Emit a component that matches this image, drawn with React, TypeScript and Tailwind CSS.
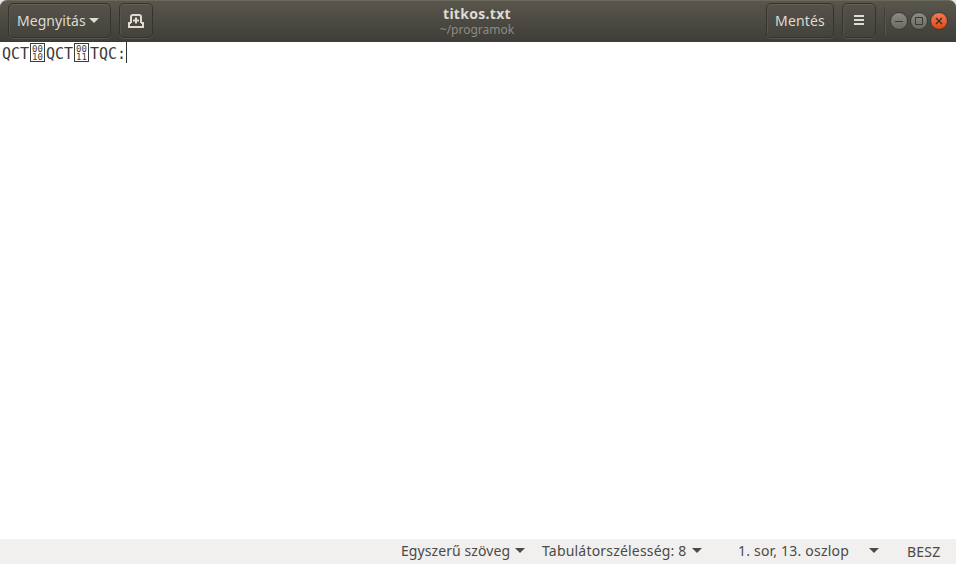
import type { ReactNode } from "react";

function HeaderButton({ className, children }: { className: string; children: ReactNode }) {
  return (
    <button
      className={`flex h-[35px] items-center rounded-[5px] border border-[#34332e] bg-linear-to-b from-[#55534a] to-[#43423c] text-[#dfdbd2] shadow-[inset_0_1px_0_#625f55,inset_1px_0_0_#57554d,0_1px_0_#56544c] ${className}`}
    >
      {children}
    </button>
  );
}

function Arrow({ className }: { className: string }) {
  return (
    <svg className={`h-[5px] w-[10px] shrink-0 ${className}`} viewBox="0 0 10 5" fill="currentColor">
      <path d="M0 0h10L5 5z" />
    </svg>
  );
}

function WindowButton({ className, children }: { className: string; children: ReactNode }) {
  return (
    <button className={`flex size-[18px] items-center justify-center rounded-full border border-[#3a3934] ${className}`}>
      <svg className="size-4 shrink-0" viewBox="0 0 16 16" fill="none" stroke="currentColor">
        {children}
      </svg>
    </button>
  );
}

function ControlGlyph({ top, bottom }: { top: string; bottom: string }) {
  return (
    <span className="mr-px flex h-[19px] w-[15px] flex-col items-center justify-center border border-[#3b3b3b] font-['DejaVu_Sans_Mono',monospace] text-[9px] leading-[8px]">
      <span>{top}</span>
      <span>{bottom}</span>
    </span>
  );
}

export default function App() {
  return (
    <div className="flex h-[564px] w-[956px] flex-col overflow-hidden bg-[#e9e4e6] font-['Noto_Sans',sans-serif] text-sm whitespace-nowrap">
      <header className="flex h-[42px] shrink-0 items-start rounded-t-[7px] border-t border-[#6a675b] bg-linear-to-b from-[#59564c] to-[#3e3d38] pt-[2px] pl-2">
        <HeaderButton className="w-[103px] pl-2">
          <span className="w-[72px] text-left tracking-[0.05px]">Megnyitás</span>
          <Arrow className="" />
        </HeaderButton>
        <HeaderButton className="ml-2 w-[34px] justify-center">
          <svg className="size-4" viewBox="0 0 16 16" fill="none" stroke="currentColor" strokeWidth="2">
            <path d="M3 10V4Q3 2 5 2H11Q13 2 13 4V10M3 10H1V14H15V10H13" />
            <path d="M8 4.5V10.5M5 7.5H11" />
          </svg>
        </HeaderButton>
        <div className="ml-[288px] flex h-[38px] w-[72px] flex-col items-center pt-[1px]">
          <span className="text-sm leading-[20px] font-bold tracking-[0.3px] text-[#dfdbd2]">titkos.txt</span>
          <span className="text-[12px] leading-[12px] text-[#8e8b83]">~/programok</span>
        </div>
        <HeaderButton className="ml-[253px] w-[68px] justify-center">
          <span className="tracking-[0.15px]">Mentés</span>
        </HeaderButton>
        <HeaderButton className="ml-2 w-[34px] justify-center">
          <svg className="size-4" viewBox="0 0 16 16" fill="currentColor">
            <path d="M3 2h10v2H3zM3 6h10v2H3zM3 10h10v2H3z" />
          </svg>
        </HeaderButton>
        <div className="mt-1 ml-[8px] h-7 w-[2px] border-r border-l border-r-[#56544c] border-l-[#403f39]" />
        <div className="mt-[9px] ml-1 flex gap-[2px]">
          <WindowButton className="bg-linear-to-b from-[#8c8b83] to-[#6b6a63] text-[#3a3934]">
            <path d="M4 8.5h8" />
          </WindowButton>
          <WindowButton className="bg-linear-to-b from-[#8c8b83] to-[#6b6a63] text-[#3a3934]">
            <path d="M4.5 4.5h7v7h-7z" />
          </WindowButton>
          <WindowButton className="bg-linear-to-b from-[#f37a50] to-[#dd4814] text-[#3a2d25]">
            <path d="M5 5l6 6M11 5l-6 6" strokeWidth="1.3" />
          </WindowButton>
        </div>
      </header>

      <main className="flex-1 bg-white">
        <div className="flex h-[21px] items-center pl-[2px] font-['DejaVu_Sans_Mono',monospace] text-[15px] leading-[21px] text-[#3b3b3b]">
          <span className="w-[28px] pt-[4px]">QCT</span>
          <ControlGlyph top="00" bottom="10" />
          <span className="w-[28px] pt-[4px]">QCT</span>
          <ControlGlyph top="00" bottom="11" />
          <span className="w-9 pt-[4px]">TQC:</span>
          <span className="h-[21px] w-px bg-[#333333]" />
        </div>
      </main>

      <footer className="flex h-[25px] shrink-0 items-center bg-[#f1f0ee] pb-px pl-[401px] text-[#4a4a4a]">
        <span className="w-[114px] tracking-[0.08px]">Egyszerű szöveg</span>
        <Arrow className="-mt-px" />
        <span className="ml-[17px] w-[150px] tracking-[0.19px]">Tabulátorszélesség: 8</span>
        <Arrow className="-mt-px" />
        <span className="ml-[36px] w-[131px] tracking-[0.2px]">1. sor, 13. oszlop</span>
        <Arrow className="-mt-px" />
        <span className="ml-[28px] pt-px tracking-[0.2px]">BESZ</span>
      </footer>
    </div>
  );
}
